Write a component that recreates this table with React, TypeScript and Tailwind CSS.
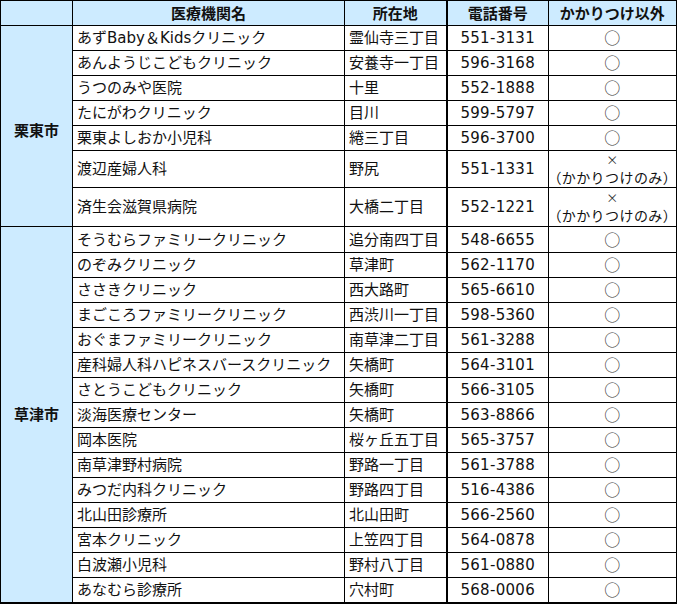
import React from "react";

type Row = { name: string; addr: string; tel: string; ok: boolean };

const ritto: Row[] = [
  { name: "あずBaby＆Kidsクリニック", addr: "霊仙寺三丁目", tel: "551-3131", ok: true },
  { name: "あんようじこどもクリニック", addr: "安養寺一丁目", tel: "596-3168", ok: true },
  { name: "うつのみや医院", addr: "十里", tel: "552-1888", ok: true },
  { name: "たにがわクリニック", addr: "目川", tel: "599-5797", ok: true },
  { name: "栗東よしおか小児科", addr: "綣三丁目", tel: "596-3700", ok: true },
  { name: "渡辺産婦人科", addr: "野尻", tel: "551-1331", ok: false },
  { name: "済生会滋賀県病院", addr: "大橋二丁目", tel: "552-1221", ok: false },
];

const kusatsu: Row[] = [
  { name: "そうむらファミリークリニック", addr: "追分南四丁目", tel: "548-6655", ok: true },
  { name: "のぞみクリニック", addr: "草津町", tel: "562-1170", ok: true },
  { name: "ささきクリニック", addr: "西大路町", tel: "565-6610", ok: true },
  { name: "まごころファミリークリニック", addr: "西渋川一丁目", tel: "598-5360", ok: true },
  { name: "おぐまファミリークリニック", addr: "南草津二丁目", tel: "561-3288", ok: true },
  { name: "産科婦人科ハピネスバースクリニック", addr: "矢橋町", tel: "564-3101", ok: true },
  { name: "さとうこどもクリニック", addr: "矢橋町", tel: "566-3105", ok: true },
  { name: "淡海医療センター", addr: "矢橋町", tel: "563-8866", ok: true },
  { name: "岡本医院", addr: "桜ヶ丘五丁目", tel: "565-3757", ok: true },
  { name: "南草津野村病院", addr: "野路一丁目", tel: "561-3788", ok: true },
  { name: "みつだ内科クリニック", addr: "野路四丁目", tel: "516-4386", ok: true },
  { name: "北山田診療所", addr: "北山田町", tel: "566-2560", ok: true },
  { name: "宮本クリニック", addr: "上笠四丁目", tel: "564-0878", ok: true },
  { name: "白波瀬小児科", addr: "野村八丁目", tel: "561-0880", ok: true },
  { name: "あなむら診療所", addr: "穴村町", tel: "568-0006", ok: true },
];

const cjk = { fontFamily: '"Noto Sans CJK JP", sans-serif' };

function DataCells({ r, h }: { r: Row; h: string }) {
  return (
    <>
      <td className={`border border-black px-[4px] py-0 text-left whitespace-nowrap ${h}`}>{r.name}</td>
      <td className="border border-black border-r-2 px-[4px] py-0 text-left whitespace-nowrap">{r.addr}</td>
      <td className="border border-black px-0 py-0 text-center whitespace-nowrap tracking-[0.3px]">{r.tel}</td>
      <td className="border border-black border-r-2 px-0 py-0 text-center whitespace-nowrap">
        {r.ok ? (
          <span className="text-[16px] leading-[18px] text-[#333]" style={cjk}>○</span>
        ) : (
          <div className="flex flex-col items-center" style={cjk}>
            <span className="text-[12px] leading-[16px] text-[#333]">×</span>
            <span className="text-[14px] leading-[19px] tracking-[0.4px]">（かかりつけのみ）</span>
          </div>
        )}
      </td>
    </>
  );
}

export default function App() {
  return (
    <div
      className="bg-white w-[677px] h-[605px] text-[#111] text-[15px] leading-[18px]"
      style={{ fontFamily: '"DejaVu Sans", "Noto Sans CJK JP", sans-serif' }}
    >
      <table className="border-collapse table-fixed w-[676px] border-b-2 border-r-2 border-black">
        <colgroup>
          <col className="w-[72px]" />
          <col className="w-[272px]" />
          <col className="w-[102px]" />
          <col className="w-[102px]" />
          <col className="w-[128px]" />
        </colgroup>
        <thead>
          <tr className="bg-[#cdebff]">
            <th className="border border-black h-[25px] p-0"></th>
            <th className="border border-black p-0 font-bold text-center" style={cjk}>医療機関名</th>
            <th className="border border-black border-r-2 p-0 font-bold text-center" style={cjk}>所在地</th>
            <th className="border border-black p-0 font-bold text-center" style={cjk}>電話番号</th>
            <th className="border border-black border-r-2 p-0 font-bold text-center" style={cjk}>かかりつけ以外</th>
          </tr>
        </thead>
        <tbody>
          {ritto.map((r, i) => (
            <tr key={r.name}>
              {i === 0 && (
                <td
                  rowSpan={ritto.length}
                  className="border border-black bg-[#cdebff] p-0 text-center font-bold align-middle pt-[8px]"
                  style={cjk}
                >
                  栗東市
                </td>
              )}
              <DataCells r={r} h={r.ok ? "h-[25px]" : i === 5 ? "h-[37px]" : "h-[39px]"} />
            </tr>
          ))}
          {kusatsu.map((r, i) => (
            <tr key={r.name}>
              {i === 0 && (
                <td
                  rowSpan={kusatsu.length}
                  className="border border-black bg-[#cdebff] p-0 text-center font-bold align-middle"
                  style={cjk}
                >
                  草津市
                </td>
              )}
              <DataCells r={r} h={i === 0 ? "h-[26px]" : "h-[25px]"} />
            </tr>
          ))}
        </tbody>
      </table>
    </div>
  );
}
